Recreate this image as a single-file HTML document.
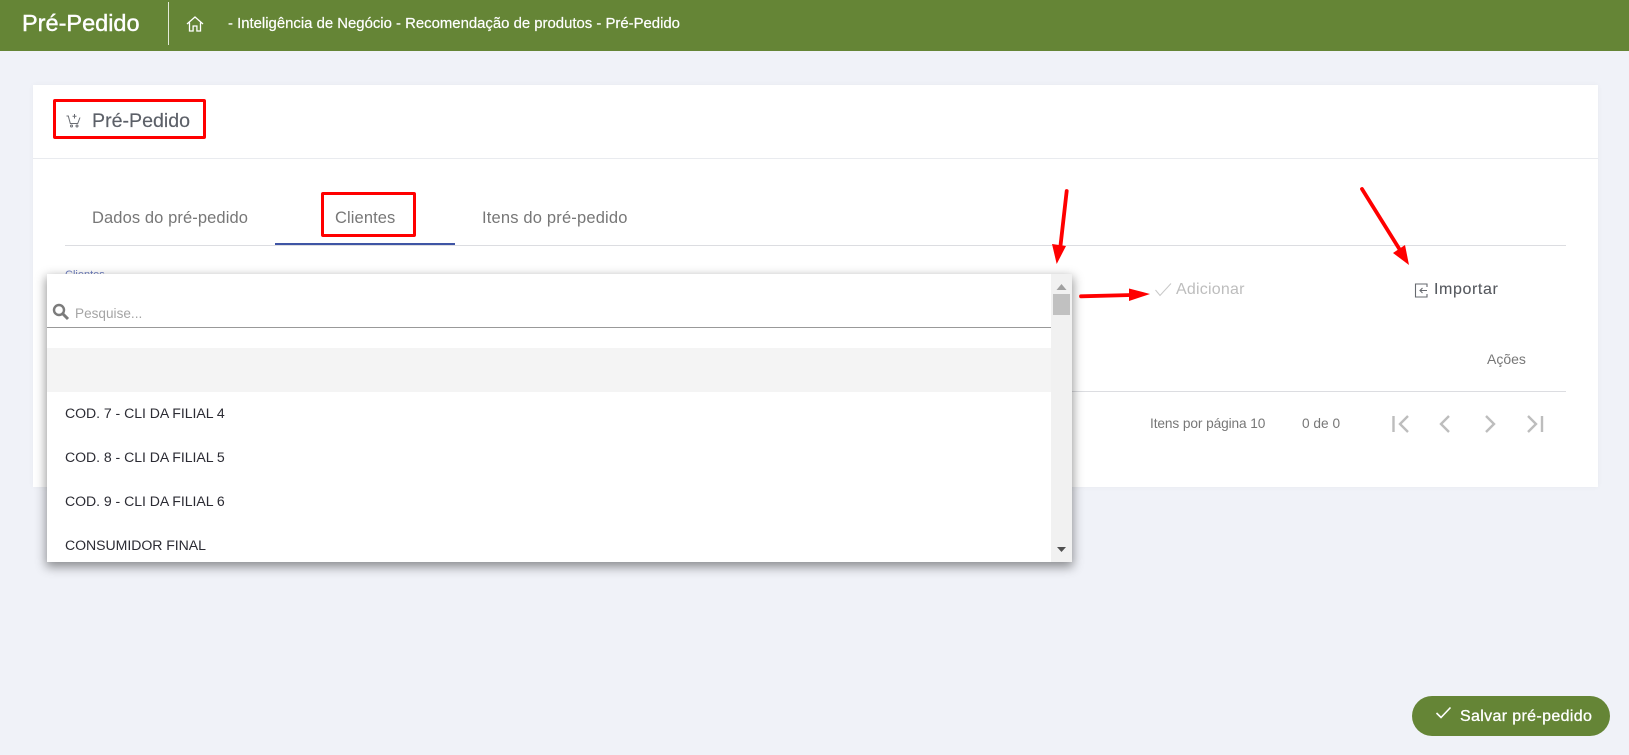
<!DOCTYPE html>
<html lang="pt-BR"><head><meta charset="utf-8"><title>Pré-Pedido</title>
<style>
html,body{margin:0;padding:0;width:1629px;height:755px;overflow:hidden;background:#f0f2f8;font-family:"Liberation Sans",sans-serif}
.a{position:absolute}
.t{position:absolute;white-space:nowrap;height:20px;line-height:20px}
svg{position:absolute;overflow:visible}
.item{position:absolute;left:65px;white-space:nowrap;height:20px;line-height:20px;font-size:14.1px;color:#2b2b33;letter-spacing:-.05px}
</style></head><body>
<div class="a" style="left:0;top:0;width:1629px;height:51px;background:#658536"></div>
<div class="t" style="left:22px;top:13px;font-size:23.5px;color:#fff;-webkit-text-stroke:.4px #fff">Pré-Pedido</div>
<div class="a" style="left:168px;top:2px;width:1px;height:43px;background:#e4ead9"></div>
<svg style="left:186px;top:15px" width="18" height="18" viewBox="0 0 18 18" fill="none" stroke="#fff" stroke-width="1.3"><path d="M1 9 9 2l8 7M3.500 7.500V16h3.600v-5h3.800v5h3.600V7.500"/></svg>
<div class="t" style="left:228px;top:14px;font-size:14.9px;color:#fff;-webkit-text-stroke:.2px #fff;letter-spacing:0">- Inteligência de Negócio - Recomendação de produtos - Pré-Pedido</div>

<div class="a" style="left:33px;top:85px;width:1565px;height:402px;background:#fff;box-shadow:0 0 6px rgba(0,0,0,.04)"></div>
<div class="a" style="left:33px;top:158px;width:1565px;height:1px;background:#e9ebef"></div>
<div class="a" style="left:53px;top:99px;width:147px;height:34px;border:3px solid #f00;border-radius:2px"></div>
<svg style="left:66px;top:113px" width="16" height="15" viewBox="0 0 16 15" fill="none" stroke="#6a6d73" stroke-width="1"><path d="M.5 3h1.800l2 7.500h7.400L14 4.500M8.500 1v4.500M6.500 3.200h4"/><circle cx="5.500" cy="13" r="1"/><circle cx="11" cy="13" r="1"/></svg>
<div class="t" style="left:92px;top:111px;font-size:19.6px;color:#5c6068;-webkit-text-stroke:.15px #5c6068">Pré-Pedido</div>

<div class="t" style="left:92px;top:208px;font-size:16.5px;color:#777;letter-spacing:.1px">Dados do pré-pedido</div>
<div class="t" style="left:335px;top:208px;font-size:16.5px;color:#777;letter-spacing:.1px">Clientes</div>
<div class="t" style="left:482px;top:208px;font-size:16.5px;color:#777;letter-spacing:.18px">Itens do pré-pedido</div>
<div class="a" style="left:65px;top:245px;width:1501px;height:1px;background:#dcdde1"></div>
<div class="a" style="left:275px;top:243px;width:180px;height:2px;background:#3f55a5"></div>
<div class="a" style="left:321px;top:192px;width:89px;height:39px;border:3px solid #f00;border-radius:2px"></div>

<div class="t" style="left:65px;top:265px;font-size:11px;color:#6f7fc0">Clientes</div>

<div class="t" style="left:1176px;top:280px;font-size:16px;color:#bdbdbd;letter-spacing:.22px">Adicionar</div>
<svg style="left:1154px;top:282px" width="18" height="15" viewBox="0 0 18 15" fill="none" stroke="#c8c8c8" stroke-width="1"><path d="M1.500 8 6 13.500 17 1.500"/></svg>
<svg style="left:1414px;top:283px" width="15" height="15" viewBox="0 0 15 15" fill="none" stroke="#66696f" stroke-width="1.1"><path d="M13 4V1H1.500v13H13v-3M13 7.500H6M8.500 5 6 7.500 8.500 10"/></svg>
<div class="t" style="left:1434px;top:280px;font-size:16px;color:#55585e;letter-spacing:.6px;-webkit-text-stroke:.1px #55585e">Importar</div>
<div class="t" style="left:1487px;top:349px;font-size:14px;color:#777">Ações</div>
<div class="a" style="left:1072px;top:391px;width:494px;height:1px;background:#dcdde1"></div>
<div class="t" style="left:1150px;top:414px;font-size:13.7px;color:#777;letter-spacing:-.1px">Itens por página 10</div>
<div class="t" style="left:1302px;top:414px;font-size:13.7px;color:#777">0 de 0</div>
<svg style="left:1390px;top:414px" width="156" height="20" viewBox="0 0 156 20" fill="none" stroke="#bdbdbd" stroke-width="2.4"><path d="M3.500 2v16M18 2 10 10l8 8M59 2l-8 8 8 8M96 2l8 8-8 8M138 2l8 8-8 8M152 2v16"/></svg>

<div class="a" style="left:47px;top:274px;width:1025px;height:288px;background:#fff;box-shadow:0 4px 10px 1px rgba(0,0,0,.42);overflow:hidden">
  <div class="a" style="left:0;top:53px;width:1004px;height:1px;background:#999"></div>
  <div class="a" style="left:0;top:74px;width:1004px;height:44px;background:#f4f4f4"></div>
  <div class="a" style="left:1004px;top:0;width:21px;height:288px;background:#f1f1f1"></div>
  <div class="a" style="left:1006px;top:20px;width:17px;height:21px;background:#c1c1c1"></div>
</div>
<svg style="left:52px;top:303px" width="17" height="17" viewBox="0 0 17 17" fill="none" stroke="#7b7b7b" stroke-width="2.4"><circle cx="7" cy="7" r="5"/><path d="m11 11 5 5" stroke-width="3"/></svg>
<div class="t" style="left:75px;top:304px;font-size:13.6px;color:#a5a5a5">Pesquise...</div>
<div class="item" style="top:403px">COD. 7 - CLI DA FILIAL 4</div>
<div class="item" style="top:447px">COD. 8 - CLI DA FILIAL 5</div>
<div class="item" style="top:491px">COD. 9 - CLI DA FILIAL 6</div>
<div class="item" style="top:535px">CONSUMIDOR FINAL</div>
<svg style="left:1051px;top:274px" width="21" height="288"><path d="M5.500 16 10.500 10 15.500 16Z" fill="#a0a0a0"/><path d="M6 273h9l-4.500 5Z" fill="#505050"/></svg>

<svg style="left:0;top:0" width="1629" height="755" fill="#f00" stroke="none">
<path d="M1066.700 191 1060 250" stroke="#f00" stroke-width="3.800" stroke-linecap="round" fill="none"/><path d="M1056.700 264 1052 244 1066 246Z"/>
<path d="M1362 189 1400 250" stroke="#f00" stroke-width="3.800" stroke-linecap="round" fill="none"/><path d="M1409 265 1393 253 1405 245Z"/>
<path d="M1081 296.300 1132 295" stroke="#f00" stroke-width="3.800" stroke-linecap="round" fill="none"/><path d="M1150 294 1129 288.500 1129 301Z"/>
</svg>

<div class="a" style="left:1412px;top:696px;width:198px;height:40px;border-radius:20px;background:#658536"></div>
<svg style="left:1435px;top:706px" width="17" height="13" viewBox="0 0 17 13" fill="none" stroke="#fff" stroke-width="1.6"><path d="M1.500 7 6 11.500 15.500 1.500"/></svg>
<div class="t" style="left:1460px;top:707px;font-size:16px;color:#fff;-webkit-text-stroke:.3px #fff;letter-spacing:.35px">Salvar pré-pedido</div>
</body></html>
